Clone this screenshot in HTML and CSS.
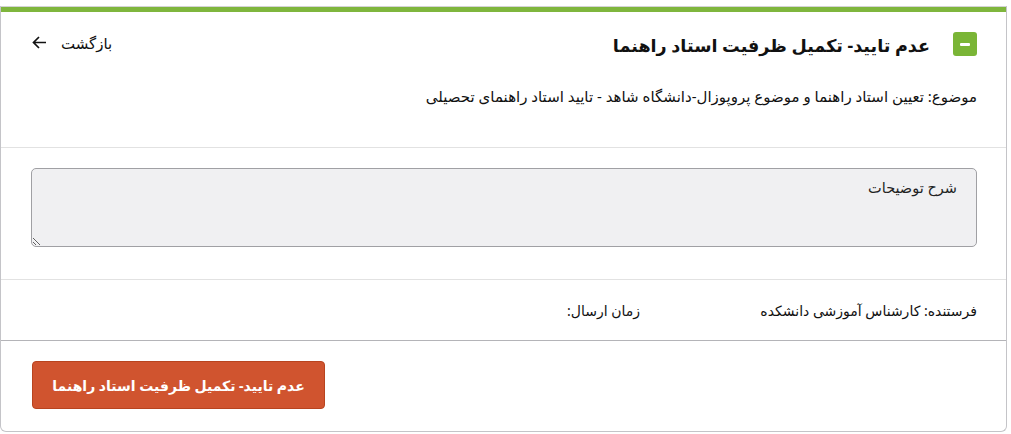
FILE: index.html
```html
<!DOCTYPE html>
<html lang="fa" dir="rtl">
<head>
<meta charset="utf-8">
<title>عدم تایید</title>
<link rel="stylesheet" href="styles.css">
</head>
<body>
<div class="page">
  <div class="card">
    <div class="accent"></div>
    <section class="head">
      <div class="head-row">
        <div class="title-group">
          <span class="badge"><span class="dash"></span></span>
          <h1 class="title">عدم تایید- تکمیل ظرفیت استاد راهنما</h1>
        </div>
        <a class="back" href="#">بازگشت
          <svg class="arrow" width="15" height="13" viewBox="0 0 15 13" aria-hidden="true"><path d="M14 6.5H1.5M7 1 1.5 6.5 7 12" fill="none" stroke="#111" stroke-width="1.7"/></svg>
        </a>
      </div>
      <p class="subject">موضوع: تعیین استاد راهنما و موضوع پروپوزال-دانشگاه شاهد - تایید استاد راهنمای تحصیلی</p>
    </section>
    <section class="desc">
      <textarea class="note" placeholder="شرح توضیحات"></textarea>
    </section>
    <section class="meta">
      <span class="sender">فرستنده: کارشناس آموزشی دانشکده</span>
      <span class="time">زمان ارسال:</span>
    </section>
    <section class="actions">
      <button class="btn" type="button">عدم تایید- تکمیل ظرفیت استاد راهنما</button>
    </section>
  </div>
</div>
</body>
</html>
```
FILE: styles.css
```css
html, body {
  margin: 0;
  padding: 0;
  background: #ffffff;
}
body {
  font-family: "Noto Sans", "DejaVu Sans", sans-serif;
  color: #111;
}
.page {
  padding: 0 4px 1px 0;
}
.card {
  border: 1px solid #c4c4c8;
  border-top: none;
  border-radius: 0 0 6px 6px;
  background: #fff;
}
.accent {
  margin-top: 6px;
  height: 5px;
  background: #7fb63d;
  border-top: 1px solid #d4d4d4;
}
.head {
  padding: 20px 29px 40px 31px;
  border-bottom: 1px solid #e2e2e2;
}
.head-row {
  display: flex;
  justify-content: space-between;
  align-items: center;
  height: 24px;
}
.title-group {
  display: flex;
  align-items: center;
  gap: 23px;
}
.badge {
  width: 24px;
  height: 24px;
  border-radius: 3px;
  background: #7ab536;
  display: flex;
  align-items: center;
  justify-content: center;
}
.dash {
  width: 10px;
  height: 3px;
  background: #fff;
  border-radius: 1px;
}
.title {
  margin: 0;
  font-size: 17.6px;
  font-weight: 700;
  line-height: 24px;
  padding-top: 2px;
}
.back {
  display: flex;
  align-items: center;
  gap: 14px;
  color: #111;
  text-decoration: none;
  font-size: 15px;
  font-weight: 400;
  margin-top: -3px;
}
.arrow {
  display: block;
}
.subject {
  margin: 29px 0 0;
  font-size: 15px;
  line-height: 22px;
}
.desc {
  padding: 20px 29px 32px 30px;
  border-bottom: 1px solid #e2e2e2;
}
.note {
  display: block;
  box-sizing: border-box;
  width: 100%;
  height: 79px;
  border: 1px solid #a0a0a4;
  border-radius: 5px;
  background: #f0f0f2;
  padding: 8px 19px;
  font-family: inherit;
  font-size: 14.5px;
  line-height: 20px;
  resize: vertical;
}
.note::placeholder {
  color: #222;
  opacity: 1;
}
.meta {
  display: grid;
  grid-template-columns: 337px auto;
  align-items: center;
  height: 60px;
  padding: 0 29px;
  border-bottom: 1px solid #b4b4b8;
  font-size: 14px;
}
.actions {
  display: flex;
  justify-content: flex-end;
  padding: 20px 31px 22px;
}
.btn {
  width: 293px;
  height: 48px;
  border: 1px solid #b8441f;
  border-radius: 4px;
  background: #d0542f;
  color: #fff;
  font-family: inherit;
  font-size: 14px;
  font-weight: 700;
  cursor: pointer;
}
```
